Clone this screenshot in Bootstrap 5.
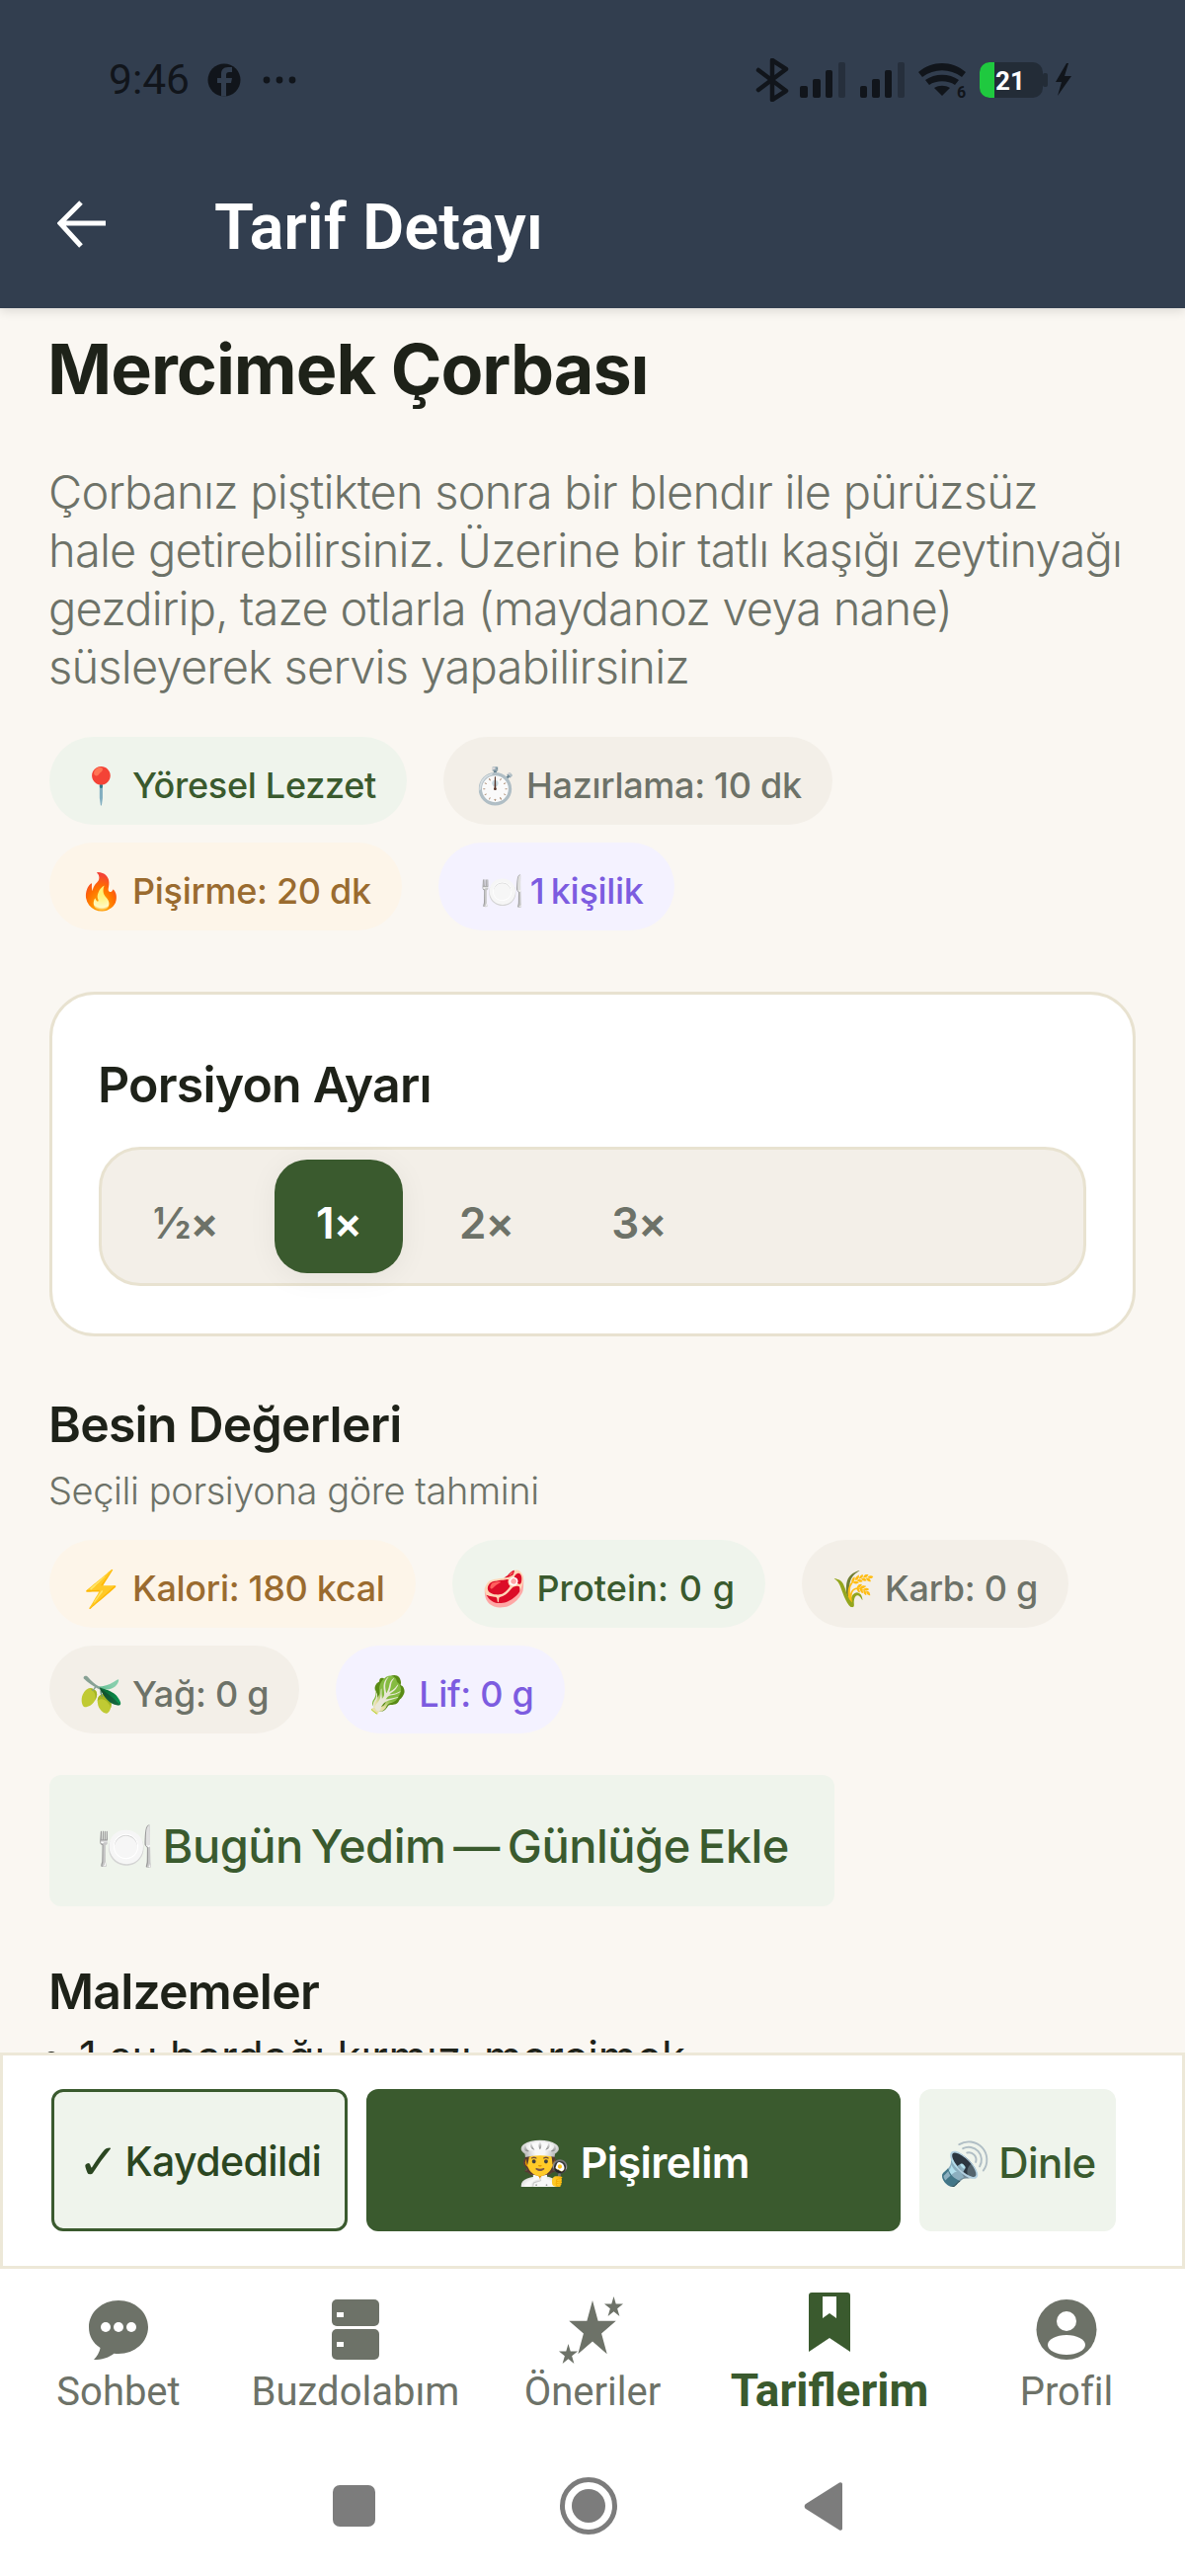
<!DOCTYPE html>
<html lang="tr">
<head>
  <meta charset="UTF-8">
  <meta name="viewport" content="width=device-width, initial-scale=1.0">
  <title>Tarif Detayı</title>
  <link href="https://cdn.jsdelivr.net/npm/bootstrap@5.3.0/dist/css/bootstrap.min.css" rel="stylesheet">
  <style>
    html, body { height: 100%; }
    body { margin: 0; background: #faf7f2; font-family: Inter, "Noto Sans", sans-serif; color: #1e2219; overflow: hidden; }
    .phone { height: 2608px; width: 1200px; }

    .app-head { background: #323e4f; height: 312px; flex: none; box-shadow: 0 3px 10px rgba(0,0,0,.12); position: relative; z-index: 2; }
    .status-row { height: 162px; padding: 0 115px 0 110px; color: #11151b; }
    .status-time { font-family: Roboto, sans-serif; font-size: 42.5px; line-height: 1; }
    .title-row { padding-left: 58px; height: 150px; padding-bottom: 20px; }
    .page-title { font-family: Roboto, sans-serif; font-size: 65px; font-weight: 600; color: #fff; margin: 6px 0 0 109px; line-height: 1; }

    .scroll-area { padding: 22px 50px 0; overflow: hidden; min-height: 0; }
    .recipe-name { font-size: 70px; font-weight: 700; letter-spacing: -1px; line-height: 80px; margin: 0 0 54px -2px; }
    .recipe-desc { font-size: 47px; font-weight: 300; line-height: 59px; color: #6d7268; margin: 0 0 42px -1px; letter-spacing: -.8px; }

    .chip-wrap { column-gap: 37px; row-gap: 18px; }
    .info-chip { height: 89px; padding: 8px 31px 0 30px; border-radius: 45px; font-size: 36px; font-weight: 500; display: inline-flex; align-items: center; letter-spacing: -.3px; white-space: pre; }
    .chip-green { background: #eff4ec; color: #3a5a2e; }
    .chip-sand { background: #f3efe8; color: #6d7268; }
    .chip-orange { background: #fdf5e9; color: #9a6b2f; }
    .chip-purple { background: #f4f2ff; color: #7c5ce0; }
    .chip-tight { word-spacing: -3px; padding-left: 42px; }
    .chip-loose { letter-spacing: .1px; word-spacing: 1px; }

    .portion-box { border: 3px solid #e8e2d0; border-radius: 46px; padding: 61px 47px 48px; margin-top: 62px; background: #fff; }
    .sec-title { font-size: 50px; font-weight: 600; letter-spacing: -.8px; line-height: 60px; margin: 0 0 0 -1px; }
    .portion-track { border: 3px solid #e8e2d0; background: #f3efe8; border-radius: 42px; padding: 10px; margin-top: 33px; gap: 15px; }
    .portion-opt { font-size: 44px; font-weight: 600; letter-spacing: -1px; color: #6d7268; padding: 12px 42px 0; height: 115px; border: 0; border-radius: 33px; background: transparent; }
    .portion-opt.is-on { background: #3a5a2e; color: #fff; box-shadow: 0 4px 30px rgba(0,0,0,.06); }

    .besin-title { margin-top: 59px; }
    .sub-note { font-size: 38px; font-weight: 300; color: #6d7268; letter-spacing: -.4px; line-height: 44px; margin: 15px 0 28px -1px; }
    .log-btn { background: #eff4ec; color: #3a5a2e; font-size: 47px; font-weight: 500; height: 133px; padding: 11px 46px 0 48px; border: 0; border-radius: 12px; margin-top: 42px; letter-spacing: -.5px; word-spacing: -4px; }
    .malz-title { margin-top: 56px; }
    .ing-list { font-size: 44px; line-height: 60px; padding-left: 30px; margin: 6px 0 0; }

    .action-bar { height: 219px; flex: none; background: #fff; border: 3px solid #ede8d8; padding: 34px 0 0 49px; gap: 19px; position: relative; z-index: 2; }
    .act-btn { height: 144px; border-radius: 12px; font-size: 42px; font-weight: 500; padding: 4px 0 0; letter-spacing: -.6px; display: flex; align-items: center; justify-content: center; white-space: pre; }
    .act-saved { width: 300px; background: #eff4ec; border: 3px solid #3a5a2e; color: #2b4621; font-size: 41px; word-spacing: -4px; }
    .check-mark { font-family: "DejaVu Sans", sans-serif; font-size: 50px; font-weight: 700; line-height: 1; }
    .act-cook { width: 541px; background: #3a5a2e; color: #fff; border: 0; font-weight: 600; font-size: 43px; }
    .act-listen { width: 199px; background: #eff4ec; color: #3a5a2e; border: 0; word-spacing: -2px; }

    .tab-row { background: #fff; flex: none; height: 163px; }
    .tab-item { width: 240px; padding-top: 23px; color: #6d7268; font-size: 40px; line-height: 48px; font-family: Roboto, sans-serif; }
    .tab-item.is-on { color: #3a5a2e; font-size: 46px; font-weight: 700; }
    .tab-item.is-on svg { margin-bottom: -2px; }
    .sys-row { background: #fff; flex: none; height: 148px; padding: 48px 0 0 337px; }
  </style>
</head>
<body>
<div class="phone d-flex flex-column">

  <!-- Header -->
  <header class="app-head">
    <div class="status-row d-flex align-items-center justify-content-between">
      <div class="d-flex align-items-center">
        <span class="status-time">9:46</span>
        <svg class="ms-3" width="94" height="36" viewBox="0 0 94 36">
          <circle cx="19" cy="18" r="16.5" fill="#11151b"/>
          <path d="M21 34.5V21h5l1-5h-6v-3c0-2 1-3 3-3h3V5h-4c-5 0-7 3-7 7v4h-4v5h4v13.500z" fill="#323e4f"/>
          <circle cx="62" cy="18" r="3.4" fill="#11151b"/><circle cx="75" cy="18" r="3.4" fill="#11151b"/><circle cx="88" cy="18" r="3.4" fill="#11151b"/>
        </svg>
      </div>
      <svg width="322" height="44" viewBox="0 0 322 44">
        <path d="M5 12l28 21-14 9V2l14 9L5 32" fill="none" stroke="#11151b" stroke-width="4.500" stroke-linejoin="round" stroke-linecap="round"/>
        <g fill="#11151b">
          <rect x="47" y="28" width="8" height="12" rx="2"/><rect x="60" y="21" width="8" height="19" rx="2"/><rect x="73" y="12" width="7" height="28" rx="2"/>
          <rect x="108" y="28" width="7" height="12" rx="2"/><rect x="120" y="21" width="8" height="19" rx="2"/><rect x="133" y="12" width="7" height="28" rx="2"/>
          <path d="M167 14c14-12 34-12 48 0l-4 5c-12-9-28-9-40 0zM174 22c10-7 24-7 34 0l-4 5c-7-5-19-5-26 0z"/>
          <path d="M183 30c5-3 11-3 16 0l-8 8z"/>
        </g>
        <rect x="86" y="4" width="7" height="36" rx="2" fill="#262f3c"/>
        <rect x="146" y="4" width="7" height="36" rx="2" fill="#262f3c"/>
        <text x="206" y="40" font-family="Roboto, sans-serif" font-size="16" font-weight="700" fill="#11151b">6</text>
        <rect x="229" y="4" width="64" height="36" rx="10" fill="#232c37"/>
        <rect x="293" y="15" width="5" height="14" rx="2" fill="#232c37"/>
        <path d="M244 4h-5a10 10 0 0 0-10 10v16a10 10 0 0 0 10 10h5z" fill="#1fc93f"/>
        <text x="245" y="32" font-family="Roboto, sans-serif" font-size="26" font-weight="700" fill="#fff">21</text>
        <path d="M317 5l-11 19h6l-4 14 14-20h-7l4-13z" fill="#11151b"/>
      </svg>
    </div>
    <div class="title-row d-flex align-items-center">
      <svg width="50" height="48" viewBox="0 0 50 48"><path d="M49 23H5M24 2L3 23l21 23" fill="none" stroke="#fff" stroke-width="5"/></svg>
      <h1 class="page-title">Tarif Detayı</h1>
    </div>
  </header>

  <!-- Tarif -->
  <main class="scroll-area flex-grow-1">
    <h2 class="recipe-name">Mercimek Çorbası</h2>
    <p class="recipe-desc">Çorbanız piştikten sonra bir blendır ile pürüzsüz hale getirebilirsiniz. Üzerine bir tatlı kaşığı zeytinyağı gezdirip, taze otlarla (maydanoz veya nane) süsleyerek servis yapabilirsiniz</p>
    <div class="d-flex flex-wrap chip-wrap">
      <span class="info-chip chip-green">📍 Yöresel Lezzet</span>
      <span class="info-chip chip-sand">⏱️ Hazırlama: 10 dk</span>
      <span class="info-chip chip-orange">🔥 Pişirme: 20 dk</span>
      <span class="info-chip chip-purple chip-tight">🍽️ 1 kişilik</span>
    </div>

    <section class="portion-box">
      <h3 class="sec-title">Porsiyon Ayarı</h3>
      <div class="portion-track d-flex">
        <button class="portion-opt">½×</button>
        <button class="portion-opt is-on">1×</button>
        <button class="portion-opt">2×</button>
        <button class="portion-opt">3×</button>
      </div>
    </section>

    <h3 class="sec-title besin-title">Besin Değerleri</h3>
    <p class="sub-note">Seçili porsiyona göre tahmini</p>
    <div class="d-flex flex-wrap chip-wrap">
      <span class="info-chip chip-orange">⚡ Kalori: 180 kcal</span>
      <span class="info-chip chip-green chip-loose">🥩 Protein: 0 g</span>
      <span class="info-chip chip-sand">🌾 Karb: 0 g</span>
      <span class="info-chip chip-sand">🫒 Yağ: 0 g</span>
      <span class="info-chip chip-purple">🥬 Lif: 0 g</span>
    </div>

    <button class="log-btn d-block">🍽️ Bugün Yedim — Günlüğe Ekle</button>

    <h3 class="sec-title malz-title">Malzemeler</h3>
    <ul class="ing-list"><li>1 su bardağı kırmızı mercimek</li></ul>
  </main>

  <!-- Alt butonlar -->
  <div class="action-bar d-flex">
    <button class="btn act-btn act-saved"><span class="check-mark">✓</span> Kaydedildi</button>
    <button class="btn act-btn act-cook">🧑‍🍳 Pişirelim</button>
    <button class="btn act-btn act-listen">🔊 Dinle</button>
  </div>

  <!-- Alt menu -->
  <nav class="tab-row d-flex">
    <div class="tab-item d-flex flex-column align-items-center">
      <svg width="100" height="78" viewBox="0 0 100 78">
        <path d="M50 9c16.600 0 30 12 30 27S66.600 63 50 63c-1.500 0-3 0-4.500-.3C40 67 33 69 25 69c3-3 6-8 6.500-12C24 52 20 45 20 36 20 21 33.400 9 50 9z" fill="#6d7268"/>
        <circle cx="37" cy="36" r="5" fill="#fff"/><circle cx="50" cy="36" r="5" fill="#fff"/><circle cx="63" cy="36" r="5" fill="#fff"/>
      </svg>
      Sohbet
    </div>
    <div class="tab-item d-flex flex-column align-items-center">
      <svg width="100" height="78" viewBox="0 0 100 78">
        <rect x="26" y="8" width="48" height="27" rx="5" fill="#6d7268"/>
        <rect x="26" y="38" width="48" height="31" rx="5" fill="#6d7268"/>
        <rect x="31" y="21" width="7" height="5" fill="#fff"/><rect x="31" y="51" width="7" height="5" fill="#fff"/>
      </svg>
      Buzdolabım
    </div>
    <div class="tab-item d-flex flex-column align-items-center">
      <svg width="100" height="78" viewBox="0 0 100 78">
        <g fill="#6d7268">
          <polygon transform="translate(50 39) scale(25 30)" points="0,-1 .2245,-.309 .951,-.309 .363,.118 .588,.809 0,.382 -.588,.809 -.363,.118 -.951,-.309 -.2245,-.309"/>
          <polygon transform="translate(71.500 16) scale(10 11)" points="0,-1 .2245,-.309 .951,-.309 .363,.118 .588,.809 0,.382 -.588,.809 -.363,.118 -.951,-.309 -.2245,-.309"/>
          <polygon transform="translate(25.500 64) scale(10 11)" points="0,-1 .2245,-.309 .951,-.309 .363,.118 .588,.809 0,.382 -.588,.809 -.363,.118 -.951,-.309 -.2245,-.309"/>
        </g>
      </svg>
      Öneriler
    </div>
    <div class="tab-item is-on d-flex flex-column align-items-center">
      <svg width="100" height="78" viewBox="0 0 100 78">
        <path d="M32 1h36a3 3 0 0 1 3 3v57L50 47 29 61V4a3 3 0 0 1 3-3z" fill="#3a5a2e"/>
        <path d="M43 5h14v22l-7-5-7 5z" fill="#fff"/>
      </svg>
      Tariflerim
    </div>
    <div class="tab-item d-flex flex-column align-items-center">
      <svg width="100" height="78" viewBox="0 0 100 78">
        <circle cx="50" cy="38.500" r="30.500" fill="#6d7268"/>
        <circle cx="50" cy="30" r="10" fill="#fff"/>
        <ellipse cx="50" cy="54" rx="19" ry="10" fill="#fff"/>
      </svg>
      Profil
    </div>
  </nav>

  <div class="sys-row">
    <svg class="d-block" width="516" height="60" viewBox="0 0 516 60">
      <rect x="0" y="8" width="43" height="42" rx="7" fill="#7c7c7c"/>
      <circle cx="259" cy="29" r="26.500" fill="none" stroke="#7c7c7c" stroke-width="5"/>
      <circle cx="259" cy="29" r="17" fill="#7c7c7c"/>
      <path d="M513 5.500a2 2 0 0 1 3 2v44a2 2 0 0 1-3 2L479 32a3 3 0 0 1 0-5z" fill="#7c7c7c"/>
    </svg>
  </div>
</div>
<script src="https://cdn.jsdelivr.net/npm/bootstrap@5.3.0/dist/js/bootstrap.bundle.min.js"></script>
</body>
</html>
